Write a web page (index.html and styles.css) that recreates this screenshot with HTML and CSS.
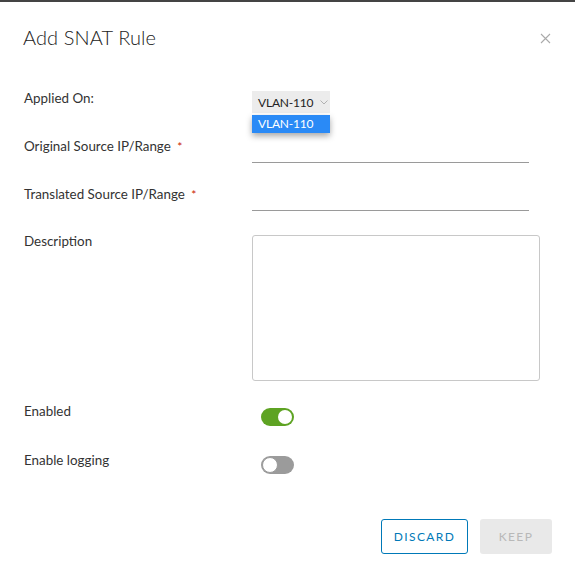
FILE: index.html
```html
<!DOCTYPE html>
<html>
<head>
<meta charset="utf-8">
<link rel="stylesheet" href="styles.css">
</head>
<body>
<div class="modal">
  <div class="header">
    <h3 class="title">Add SNAT Rule</h3>
    <button class="close" aria-label="Close">
      <svg width="11" height="11" viewBox="0 0 11 11"><path d="M1 1L10 10M10 1L1 10" stroke="#aaa" stroke-width="1.1" fill="none"/></svg>
    </button>
  </div>
  <div class="form">
    <div class="row row-applied">
      <label class="label">Applied On:</label>
      <div class="control">
        <div class="select">
          <span class="select-text">VLAN-110</span>
          <svg class="chev" width="8" height="5" viewBox="0 0 8 5"><path d="M0.5 0.5L4 4L7.5 0.5" stroke="#aaa" stroke-width="0.9" fill="none"/></svg>
        </div>
        <div class="menu"><div class="option">VLAN-110</div></div>
      </div>
    </div>
    <div class="row row-orig">
      <label class="label">Original Source IP/Range <span class="req">*</span></label>
      <div class="control"><div class="input"></div></div>
    </div>
    <div class="row row-trans">
      <label class="label">Translated Source IP/Range <span class="req">*</span></label>
      <div class="control"><div class="input"></div></div>
    </div>
    <div class="row row-desc">
      <label class="label">Description</label>
      <div class="control"><div class="textarea"></div></div>
    </div>
    <div class="row row-enabled">
      <label class="label">Enabled</label>
      <div class="control"><div class="toggle on"><span class="knob"></span></div></div>
    </div>
    <div class="row row-log">
      <label class="label">Enable logging</label>
      <div class="control"><div class="toggle off"><span class="knob"></span></div></div>
    </div>
  </div>
  <div class="footer">
    <button class="btn btn-outline">DISCARD</button>
    <button class="btn btn-disabled">KEEP</button>
  </div>
</div>
</body>
</html>
```
FILE: styles.css
```css
html, body {
  margin: 0;
  padding: 0;
  background: #fff;
}
body {
  font-family: "Lato", "Open Sans", sans-serif;
  color: #333;
}
.modal {
  width: 575px;
  height: 578px;
  box-sizing: border-box;
  border-top: 2px solid #444;
  background: #fff;
  position: relative;
}
.header {
  display: flex;
  justify-content: space-between;
  align-items: flex-start;
  padding: 22px 24px 0 23px;
  height: 63px;
  box-sizing: border-box;
}
.title {
  margin: 0;
  font-family: "Lato", sans-serif;
  font-weight: 300;
  font-size: 20px;
  line-height: 26px;
  color: #222;
  letter-spacing: 0.1px;
}
.close {
  border: 0;
  background: none;
  padding: 0;
  margin-top: 9px;
  width: 11px;
  height: 11px;
  display: flex;
}
.form {
  padding: 0 24px;
}
.row {
  display: flex;
  align-items: flex-start;
}
.label {
  width: 228px;
  flex: none;
  font-size: 13.4px;
  line-height: 20px;
  color: #333;
  white-space: nowrap;
}
.req {
  color: #c92100;
  font-size: 12px;
  margin-left: 3px;
}
.control {
  position: relative;
}
.row-applied { margin-top: 23px; height: 25px; }
.row-orig { margin-top: 23px; height: 26px; }
.row-trans { margin-top: 22px; height: 27px; }
.row-desc { margin-top: 20px; }
.row-enabled { margin-top: 20px; }
.row-log { margin-top: 24px; }

.select {
  margin-top: 3px;
  width: 78px;
  height: 22px;
  box-sizing: border-box;
  background: #ececec;
  display: flex;
  align-items: center;
  padding-left: 6px;
  font-size: 12px;
  letter-spacing: -0.2px;
  color: #222;
  white-space: nowrap;
}
.select-text {
  flex: none;
}
.chev {
  flex: none;
  margin-left: 7px;
  margin-top: 1px;
}
.menu {
  position: absolute;
  left: 0;
  top: 27px;
  width: 78px;
  background: #fff;
  box-shadow: 0 3px 6px rgba(0,0,0,0.35);
}
.option {
  background: #2a8af6;
  color: #fff;
  font-size: 12px;
  letter-spacing: -0.2px;
  line-height: 18px;
  height: 18px;
  padding-left: 6px;
  white-space: nowrap;
}
.input {
  margin-top: 2px;
  width: 277px;
  height: 24px;
  border-bottom: 1px solid #9a9a9a;
}
.textarea {
  margin-top: 4px;
  width: 288px;
  height: 146px;
  box-sizing: border-box;
  border: 1px solid #c8c8c8;
  border-radius: 3px;
}
.toggle {
  width: 33px;
  height: 18px;
  border-radius: 9px;
  box-sizing: border-box;
  margin-left: 9px;
  position: relative;
}
.row-enabled .toggle { margin-top: 7px; }
.row-log .toggle { margin-top: 6px; }
.toggle.on {
  background: #5ea323;
}
.toggle.off {
  background: #9b9b9b;
}
.knob {
  position: absolute;
  top: 2px;
  width: 14px;
  height: 14px;
  border-radius: 50%;
  background: #fff;
  box-sizing: border-box;
}
.toggle.on .knob { right: 2px; }
.toggle.off .knob { left: 1px; top: 1px; width: 16px; height: 16px; border: 1px solid #9b9b9b; }

.footer {
  position: absolute;
  left: 0;
  right: 0;
  top: 517px;
  display: flex;
  justify-content: flex-end;
  gap: 12px;
  padding-right: 23px;
}
.btn {
  height: 35px;
  box-sizing: border-box;
  border-radius: 3px;
  font-family: "Lato", sans-serif;
  font-size: 12px;
  letter-spacing: 1.4px;
  padding: 0;
}
.btn-outline {
  width: 87px;
  border: 1px solid #0079b8;
  background: #fff;
  color: #0079b8;
}
.btn-disabled {
  width: 72px;
  border: 0;
  background: #e9e9e9;
  color: #b8b8b8;
}
```
